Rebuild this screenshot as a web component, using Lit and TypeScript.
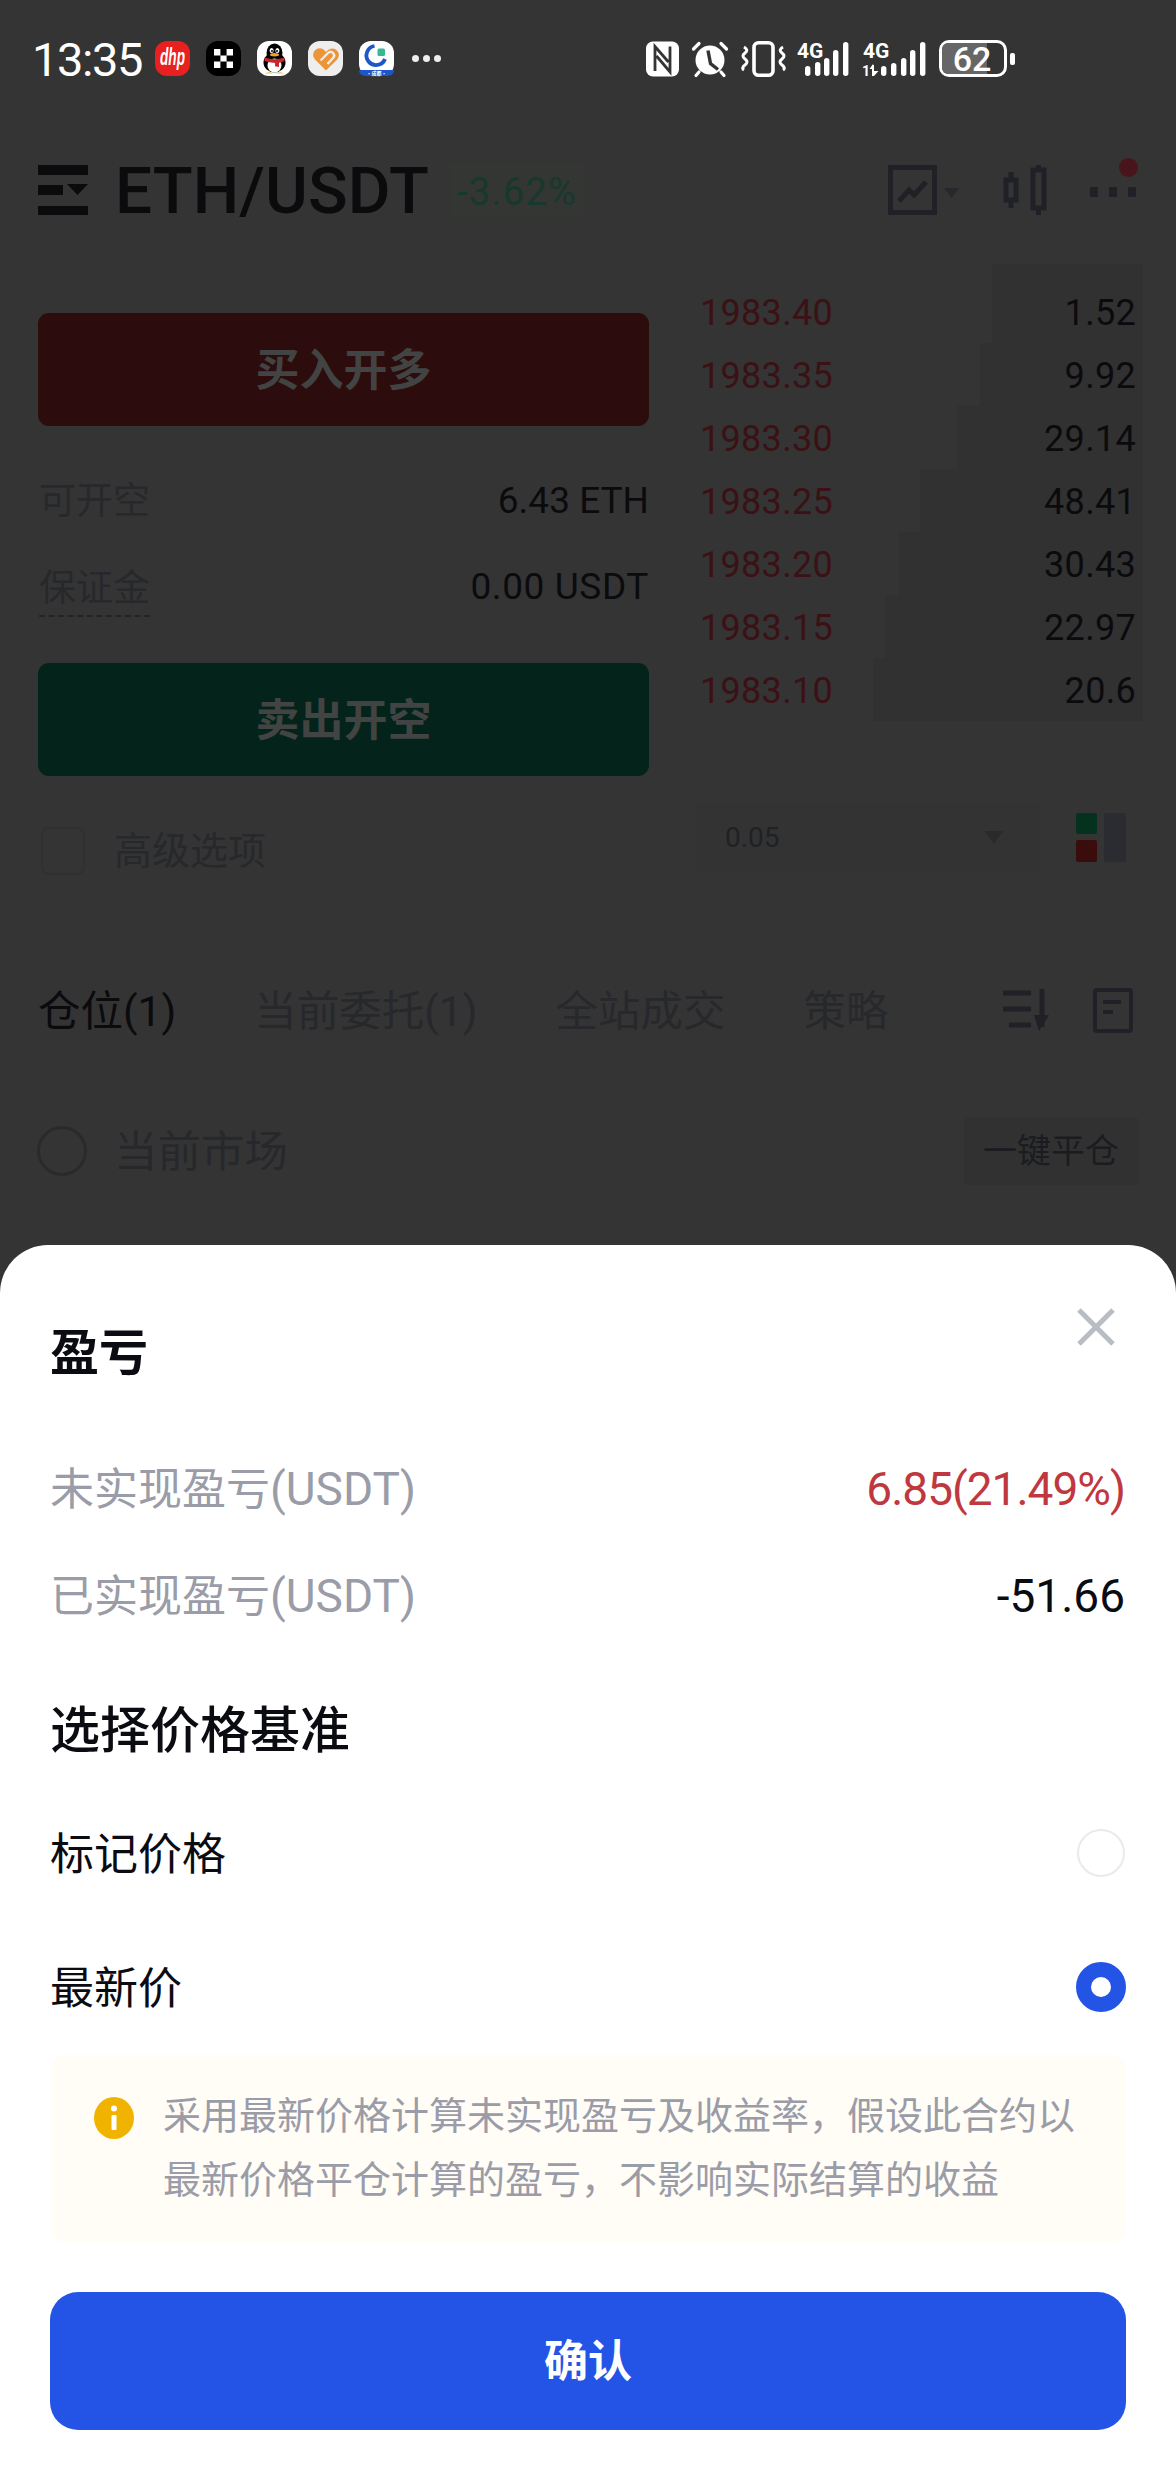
import { LitElement, html, css, svg } from "lit";
import { customElement } from "lit/decorators.js";

const BOOK = [
  { price: "1983.40", qty: "1.52", depth: 151 },
  { price: "1983.35", qty: "9.92", depth: 163 },
  { price: "1983.30", qty: "29.14", depth: 186 },
  { price: "1983.25", qty: "48.41", depth: 223 },
  { price: "1983.20", qty: "30.43", depth: 245 },
  { price: "1983.15", qty: "22.97", depth: 258 },
  { price: "1983.10", qty: "20.6", depth: 270 },
];

const TABS = ["当前委托(1)", "全站成交", "策略"];

const appIcons = html`
  <svg class="app" viewBox="0 0 35 35">
    <rect width="35" height="35" rx="12" fill="#e8201f" />
    <text x="5" y="24" textLength="25" lengthAdjust="spacingAndGlyphs" class="dhp">dhp</text>
  </svg>
  <svg class="app" viewBox="0 0 35 35">
    <rect width="35" height="35" rx="12" fill="#000" />
    <path fill="#fff" d="M8 8h6.400v6.400H8zM20.600 8H27v6.400h-6.400zM14.400 14.400h6.200v6.200h-6.200zM8 20.600h6.400V27H8zM20.600 20.600H27V27h-6.400z" />
  </svg>
  <svg class="app" viewBox="0 0 35 35">
    <rect width="35" height="35" rx="12" fill="#fff" />
    <ellipse cx="17.500" cy="21.500" rx="11" ry="10" fill="#000" />
    <ellipse cx="17.500" cy="12" rx="8" ry="9.500" fill="#000" />
    <ellipse cx="17.500" cy="24.500" rx="7" ry="7" fill="#fff" />
    <ellipse cx="14.600" cy="9.500" rx="2" ry="2.600" fill="#fff" />
    <ellipse cx="20.400" cy="9.500" rx="2" ry="2.600" fill="#fff" />
    <circle cx="15" cy="10" r="1" fill="#000" />
    <circle cx="20" cy="10" r="1" fill="#000" />
    <ellipse cx="17.500" cy="13.800" rx="4.500" ry="1.700" fill="#f2a41c" />
    <path fill="#c9272e" d="M7.500 16.500q10 3.400 20 0v3.600q-3 1.400-5.500 1.700v4.200l-4-.8v-3.200q-6.500-.3-10.500-1.900z" />
    <path fill="#f2c14c" d="M8 32.500q4-2.500 8 0zM19 32.500q4-2.500 8 0z" />
  </svg>
  <svg class="app" viewBox="0 0 35 35">
    <rect width="35" height="35" rx="12" fill="#eeeeee" />
    <path fill="#ec9437" d="M18 29.500 7 18.500a6.600 6.600 0 0 1 9.400-9.300L18 11l2-2a6.600 6.600 0 0 1 9.200 9.400z" />
    <path fill="none" stroke="#eeeeee" stroke-width="2.400" d="M12.500 19.500 20 12q2.500-2.500 5 0t0 5l-5.500 6" />
  </svg>
  <svg class="app" viewBox="0 0 35 35">
    <rect width="35" height="35" rx="12" fill="#fff" />
    <path fill="#1c56c8" d="M0 29h35v.5q0 5.500-9 5.500H9q-9 0-9-5.500z" />
    <path fill="none" stroke="#1c56c8" stroke-width="3.800" d="M15.500 5a9.600 9.600 0 1 0 10.500 13" />
    <rect x="18.500" y="7.500" width="7.500" height="7.500" rx="1.500" fill="#36b894" />
    <text x="17.500" y="33.600" text-anchor="middle" class="tiny">·成都·</text>
  </svg>
`;

const bars = (xs: number[], hs: number[]) =>
  xs.map((x, i) => svg`<rect x=${x} y=${35 - hs[i]} width="5.400" height=${hs[i]} rx="2.700" fill="#fff" />`);

const statusIcons = html`
  <svg class="st" width="33" height="36" viewBox="0 0 33 36">
    <rect y="0.500" width="33" height="35" rx="7" fill="#fff" />
    <path fill="none" stroke="#343434" stroke-width="2.800" d="M9 30V5.500L22.500 21M24 5.500V31L10.500 15" />
  </svg>
  <svg class="st" width="38" height="36" viewBox="0 0 38 36">
    <path fill="none" stroke="#fff" stroke-width="3.200" stroke-linecap="round" d="M2.500 8 8 2.500M35.500 8 30 2.500M8 31l-3 3.500M30 31l3 3.500" />
    <circle cx="19" cy="19" r="14.500" fill="#fff" />
    <path fill="none" stroke="#343434" stroke-width="3.400" d="M17 9.500l2.500 13 7.500 6" />
  </svg>
  <svg class="st" width="45" height="36" viewBox="0 0 45 36">
    <rect x="13" y="1.800" width="19" height="32.400" rx="4.500" fill="none" stroke="#fff" stroke-width="3.600" />
    <path fill="none" stroke="#fff" stroke-width="3" d="M3 6q5 3 1 6t0 6 0 6-1 5M42 6q-5 3-1 6t0 6 0 6 1 5" />
  </svg>
  <svg class="sig-a" width="52" height="36" viewBox="0 0 52 36">
    <text x="0" y="17" class="net">4G</text>
    ${bars([8, 18, 27, 36, 46], [10, 14, 18, 26, 34])}
  </svg>
  <svg class="st" width="64" height="36" viewBox="0 0 64 36">
    <text x="2" y="17" class="net">4G</text>
    <text x="1" y="35" class="sim">1</text>
    <path fill="none" stroke="#fff" stroke-width="2" d="M12 35V24" />
    <path fill="#fff" d="M8.500 28 12 23l1 5zM13 30h4.500L13 35z" />
    ${bars([20, 30, 40, 49, 59], [10, 13, 18, 26, 34])}
  </svg>
  <span class="batt">
    <span class="batt-body"><span class="batt-fill"></span><span class="batt-num">62</span></span>
    <span class="batt-nub"></span>
  </span>
`;

@customElement("app-root")
export class AppRoot extends LitElement {
  static styles = css`
    :host {
      display: block;
      width: 1176px;
      height: 2480px;
      overflow: hidden;
      background: #343434;
      font-family: Roboto, "Noto Sans CJK SC", sans-serif;
      --ink: #0b0b0e;
      --dim: #27282c;
    }
    svg {
      overflow: visible;
    }
    .back {
      height: 1245px;
      overflow: hidden;
    }

    /* status bar */
    .status {
      height: 117px;
      display: flex;
      align-items: center;
      padding-left: 32px;
      color: #fff;
    }
    .time {
      font-size: 47px;
      line-height: 50px;
      width: 123px;
      letter-spacing: -1.4px;
      padding-top: 2px;
    }
    .apps {
      display: flex;
      gap: 16px;
    }
    .app {
      width: 35px;
      height: 35px;
      display: block;
    }
    .dhp {
      font: italic 700 23px "Liberation Sans", sans-serif;
      fill: #fff;
    }
    .tiny {
      font: 700 5px "Noto Sans CJK SC", sans-serif;
      fill: #fff;
    }
    .more {
      display: flex;
      gap: 4px;
      margin-left: 18px;
    }
    .more i {
      width: 7px;
      height: 7px;
      border-radius: 50%;
      background: #eee;
    }
    .stats {
      margin-left: 205px;
      display: flex;
      align-items: center;
      gap: 12px;
    }
    .st {
      display: block;
    }
    .sig-a {
      display: block;
      margin-left: -1px;
    }
    .net {
      font: 700 21px Roboto, sans-serif;
      fill: #fff;
    }
    .sim {
      font: 700 14px Roboto, sans-serif;
      fill: #fff;
    }
    .batt {
      display: flex;
      align-items: center;
      gap: 3px;
      margin-left: 2px;
    }
    .batt-body {
      position: relative;
      box-sizing: border-box;
      width: 68px;
      height: 37px;
      border: 3px solid #fff;
      border-radius: 10px;
      display: flex;
      align-items: center;
      justify-content: center;
    }
    .batt-fill {
      position: absolute;
      left: 0;
      top: 0;
      bottom: 0;
      width: 45px;
      border-radius: 6px 0 0 6px;
      background: #666;
    }
    .batt-num {
      position: relative;
      font: 500 34px/34px Roboto, sans-serif;
      color: #fff;
      margin-right: 2px;
    }
    .batt-nub {
      width: 5px;
      height: 12px;
      background: #fff;
      border-radius: 2px;
    }

    /* instrument header */
    .head {
      display: flex;
      align-items: center;
      height: 50px;
      margin-top: 48px;
      padding-left: 38px;
    }
    .menu {
      display: block;
      margin-right: 27px;
    }
    .pair {
      font-size: 65.5px;
      line-height: 50px;
      padding-top: 2px;
      font-weight: 500;
      color: var(--ink);
      letter-spacing: 0.1px;
    }
    .chg {
      margin-left: 21px;
      padding: 6px 7px 2px;
      font-size: 38px;
      line-height: 44px;
      letter-spacing: 1.3px;
      color: #17382e;
      background: #333633;
    }
    .tools {
      margin-left: auto;
      display: flex;
      align-items: center;
      padding-right: 40px;
    }
    .tools svg {
      display: block;
    }
    .kline {
      margin-right: 44px;
    }
    .candle {
      margin-right: 43px;
    }
    .dots {
      position: relative;
      display: flex;
      gap: 11px;
      margin-top: 4px;
    }
    .dots i {
      width: 8px;
      height: 10px;
      background: #1f2126;
    }
    .dots b {
      position: absolute;
      right: -2px;
      top: -29px;
      width: 19px;
      height: 19px;
      border-radius: 50%;
      background: #47151a;
    }

    /* trade panel */
    .trade {
      display: grid;
      grid-template-columns: 611px 443px;
      column-gap: 51px;
      padding-left: 38px;
      margin-top: 49px;
    }
    .form {
      padding-top: 49px;
    }
    .act {
      box-sizing: border-box;
      height: 113px;
      padding-bottom: 6px;
      border-radius: 11px;
      display: flex;
      align-items: center;
      justify-content: center;
      font-size: 44px;
      font-weight: 700;
      color: #414442;
    }
    .buy {
      background: #2c0c0c;
      margin-bottom: 44px;
    }
    .sell {
      background: #04231a;
      margin-top: 47px;
    }
    .kv {
      height: 60px;
      display: flex;
      align-items: center;
      justify-content: space-between;
      font-size: 37px;
    }
    .kv + .kv {
      margin-top: 26px;
    }
    .kv span:first-child {
      color: var(--dim);
      margin-left: 1px;
      padding-bottom: 5px;
    }
    .kv span:last-child {
      color: var(--ink);
    }
    .kv .wide {
      letter-spacing: 0.6px;
    }
    .kv .dash {
      height: 54px;
      line-height: 66px;
      padding-bottom: 0;
      border-bottom: 2px dashed #232427;
    }
    .adv {
      display: flex;
      align-items: center;
      height: 52px;
      margin-top: 49px;
      padding-left: 3px;
      font-size: 38px;
      color: var(--dim);
    }
    .adv span:last-child {
      padding-bottom: 8px;
    }
    .check {
      box-sizing: border-box;
      width: 44px;
      height: 48px;
      margin-right: 29px;
      border: 2px solid #303030;
      border-radius: 8px;
    }
    .lvl {
      box-sizing: border-box;
      display: flex;
      justify-content: space-between;
      align-items: center;
      height: 63px;
      padding: 2px 7px 0 0;
      font-size: 36px;
      line-height: 60px;
      background-image: linear-gradient(#313131, #313131);
      background-repeat: no-repeat;
      background-position: right bottom;
      color: #0b0b0e;
      letter-spacing: 0.3px;
    }
    .lvl:first-child {
      height: 79px;
      padding-top: 18px;
    }
    .lvl span:first-child {
      color: #3b1115;
    }
    .book-foot {
      display: flex;
      margin-top: 82px;
    }
    .select {
      box-sizing: border-box;
      width: 344px;
      height: 69px;
      margin-left: -4px;
      padding: 0 37px 0 29px;
      display: flex;
      align-items: center;
      justify-content: space-between;
      font-size: 28px;
      color: #1f2125;
      background: #333333;
      border-radius: 6px;
    }
    .tri {
      width: 0;
      height: 0;
      border-left: 9px solid transparent;
      border-right: 9px solid transparent;
      border-top: 13px solid #2a2a2c;
    }
    .layout {
      display: block;
      margin: 10px 0 0 36px;
    }

    /* positions tabs */
    .tabs {
      display: flex;
      align-items: center;
      gap: 78px;
      height: 50px;
      margin-top: 108px;
      padding: 0 43px 0 38px;
      font-size: 42.5px;
      color: var(--dim);
    }
    .tabs > span {
      padding-bottom: 5px;
    }
    .tabs .on {
      color: var(--ink);
    }
    .tab-icons {
      margin-left: auto;
      display: flex;
      gap: 43px;
      align-items: center;
    }
    .tab-icons svg {
      display: block;
    }
    .market {
      display: flex;
      align-items: center;
      height: 68px;
      margin-top: 82px;
      padding: 0 38px 0 37px;
      font-size: 43.5px;
      color: var(--dim);
    }
    .market .lbl {
      padding-bottom: 5px;
    }
    .ring {
      box-sizing: border-box;
      width: 50px;
      height: 50px;
      border: 3px solid #2a2a2c;
      border-radius: 50%;
      margin-right: 27px;
    }
    .close-all {
      box-sizing: border-box;
      margin-left: auto;
      width: 174px;
      height: 68px;
      padding-bottom: 5px;
      display: flex;
      align-items: center;
      justify-content: center;
      font-size: 34px;
      background: #313131;
      color: #1b1c20;
      border-radius: 4px;
    }

    /* bottom sheet */
    .sheet {
      height: 1235px;
      box-sizing: border-box;
      padding: 63px 50px 0;
      background: #fff;
      border-radius: 48px 48px 0 0;
    }
    .sheet-head {
      display: flex;
      justify-content: space-between;
      height: 88px;
    }
    .title {
      font-size: 49px;
      font-weight: 700;
      line-height: 91px;
      color: #0b0b12;
    }
    .close {
      display: block;
      margin-right: 11px;
    }
    .pnl {
      display: flex;
      justify-content: space-between;
      align-items: center;
      height: 60px;
      padding-right: 1px;
      font-size: 44px;
      color: #0b0b12;
    }
    .pnl span:first-child {
      color: #9a9ca8;
      padding-bottom: 5px;
    }
    .pnl .ccy {
      font-size: 46px;
      padding: 0;
    }
    .pnl .val {
      font-size: 46px;
      padding-top: 2px;
    }
    .pnl .up {
      color: #c0383f;
      letter-spacing: -1px;
    }
    .first {
      margin-top: 62px;
    }
    .second {
      margin-top: 47px;
    }
    .section {
      margin-top: 74px;
      font-size: 50px;
      line-height: 64px;
      font-weight: 500;
      color: #0b0b12;
    }
    .opt {
      display: flex;
      justify-content: space-between;
      align-items: center;
      height: 50px;
      margin-top: 65px;
      font-size: 44px;
      color: #0b0b12;
    }
    .opt + .opt {
      margin-top: 84px;
    }
    .opt span:first-child {
      padding-bottom: 4px;
    }
    .radio {
      box-sizing: border-box;
      width: 48px;
      height: 48px;
      margin-right: 1px;
      border-radius: 50%;
      border: 2px solid #e9eaec;
    }
    .radio.sel {
      width: 50px;
      height: 50px;
      margin-right: 0;
      border: 15px solid #2354e6;
      background: #fff;
    }
    .note {
      display: flex;
      align-items: flex-start;
      gap: 29px;
      margin: 43px 1px 0 2px;
      padding: 29px 40px 30px 42px;
      background: #fffdf6;
      border-radius: 12px;
      font-size: 38px;
      line-height: 64px;
      color: #9a9ca8;
    }
    .note svg {
      display: block;
      flex: none;
      margin-top: 13px;
    }
    .confirm {
      box-sizing: border-box;
      height: 138px;
      padding-bottom: 6px;
      margin-top: 50px;
      display: flex;
      align-items: center;
      justify-content: center;
      background: #2354e6;
      border-radius: 28px;
      font-size: 44px;
      font-weight: 700;
      color: #fff;
    }
  `;

  render() {
    return html`
      <div class="back">
        <div class="status">
          <span class="time">13:35</span>
          <div class="apps">${appIcons}</div>
          <div class="more"><i></i><i></i><i></i></div>
          <div class="stats">${statusIcons}</div>
        </div>

        <div class="head">
          <svg class="menu" width="50" height="50" viewBox="0 0 50 50" fill="#0b0b0e">
            <path d="M0 0h50v10H0zM0 20h25v10H0zM29 19h21L39.500 30zM0 41h50v9H0z" />
          </svg>
          <span class="pair">ETH/USDT</span>
          <span class="chg">-3.62%</span>
          <div class="tools">
            <svg class="kline" width="71" height="50" viewBox="0 0 71 50" fill="none" stroke="#1f2126">
              <rect x="2.500" y="2.500" width="44" height="45" stroke-width="5" />
              <path stroke-width="5" d="M11 36l10-11 5 5 12-13" />
              <path fill="#27282c" stroke="none" d="M56 23h15l-7.500 10z" />
            </svg>
            <svg class="candle" width="44" height="50" viewBox="0 0 44 50" fill="none" stroke="#1f2126">
              <path stroke-width="5" d="M8 7v8M8 35v8M35.500 0v5M35.500 43v7" />
              <rect x="3" y="15" width="10" height="20" stroke-width="5" />
              <rect x="30" y="5" width="11" height="38" stroke-width="5" />
            </svg>
            <div class="dots"><i></i><i></i><i></i><b></b></div>
          </div>
        </div>

        <div class="trade">
          <div class="form">
            <div class="act buy">买入开多</div>
            <div class="kv"><span>可开空</span><span>6.43 ETH</span></div>
            <div class="kv"><span class="dash">保证金</span><span class="wide">0.00 USDT</span></div>
            <div class="act sell">卖出开空</div>
            <div class="adv"><span class="check"></span><span>高级选项</span></div>
          </div>
          <div class="book">
            ${BOOK.map(
              (l) => html`<div class="lvl" style="background-size: ${l.depth}px 100%">
                <span>${l.price}</span><span>${l.qty}</span>
              </div>`
            )}
            <div class="book-foot">
              <div class="select"><span>0.05</span><span class="tri"></span></div>
              <svg class="layout" width="50" height="49" viewBox="0 0 50 49">
                <rect width="21" height="21" rx="2" fill="#04321f" />
                <rect y="27" width="21" height="22" rx="2" fill="#3a0c0c" />
                <rect x="28" width="22" height="49" rx="2" fill="#2b2c31" />
              </svg>
            </div>
          </div>
        </div>

        <div class="tabs">
          <span class="on">仓位(1)</span>
          ${TABS.map((t) => html`<span>${t}</span>`)}
          <div class="tab-icons">
            <svg width="47" height="42" viewBox="0 0 47 42" fill="none" stroke="#1f2126" stroke-width="5">
              <path d="M0 4h28M0 20h28M6 36h22" />
              <path d="M39 0v38" />
              <path fill="#1f2126" stroke="none" d="M31 26h15L36 42z" />
            </svg>
            <svg width="40" height="45" viewBox="0 0 40 45" fill="none" stroke="#1f2126" stroke-width="4">
              <rect x="2" y="2" width="36" height="41" rx="2" />
              <path d="M10 14h18M10 24h10" />
            </svg>
          </div>
        </div>

        <div class="market">
          <span class="ring"></span>
          <span class="lbl">当前市场</span>
          <span class="close-all">一键平仓</span>
        </div>
      </div>

      <div class="sheet">
        <div class="sheet-head">
          <span class="title">盈亏</span>
          <svg class="close" width="38" height="38" viewBox="0 0 38 38" fill="none" stroke="#b8bcc4" stroke-width="5">
            <path d="M2 2l34 34M36 2 2 36" />
          </svg>
        </div>
        <div class="pnl first">
          <span>未实现盈亏<span class="ccy">(USDT)</span></span><span class="val up">6.85(21.49%)</span>
        </div>
        <div class="pnl second">
          <span>已实现盈亏<span class="ccy">(USDT)</span></span><span class="val">-51.66</span>
        </div>
        <div class="section">选择价格基准</div>
        <div class="opt"><span>标记价格</span><span class="radio"></span></div>
        <div class="opt"><span>最新价</span><span class="radio sel"></span></div>
        <div class="note">
          <svg width="40" height="42" viewBox="0 0 40 42">
            <ellipse cx="20" cy="21" rx="20" ry="21" fill="#f0b400" />
            <rect x="17.500" y="18" width="5" height="15" rx="1" fill="#fff" />
            <circle cx="20" cy="11.500" r="3" fill="#fff" />
          </svg>
          <span>采用最新价格计算未实现盈亏及收益率，假设此合约以最新价格平仓计算的盈亏，不影响实际结算的收益</span>
        </div>
        <div class="confirm">确认</div>
      </div>
    `;
  }
}
